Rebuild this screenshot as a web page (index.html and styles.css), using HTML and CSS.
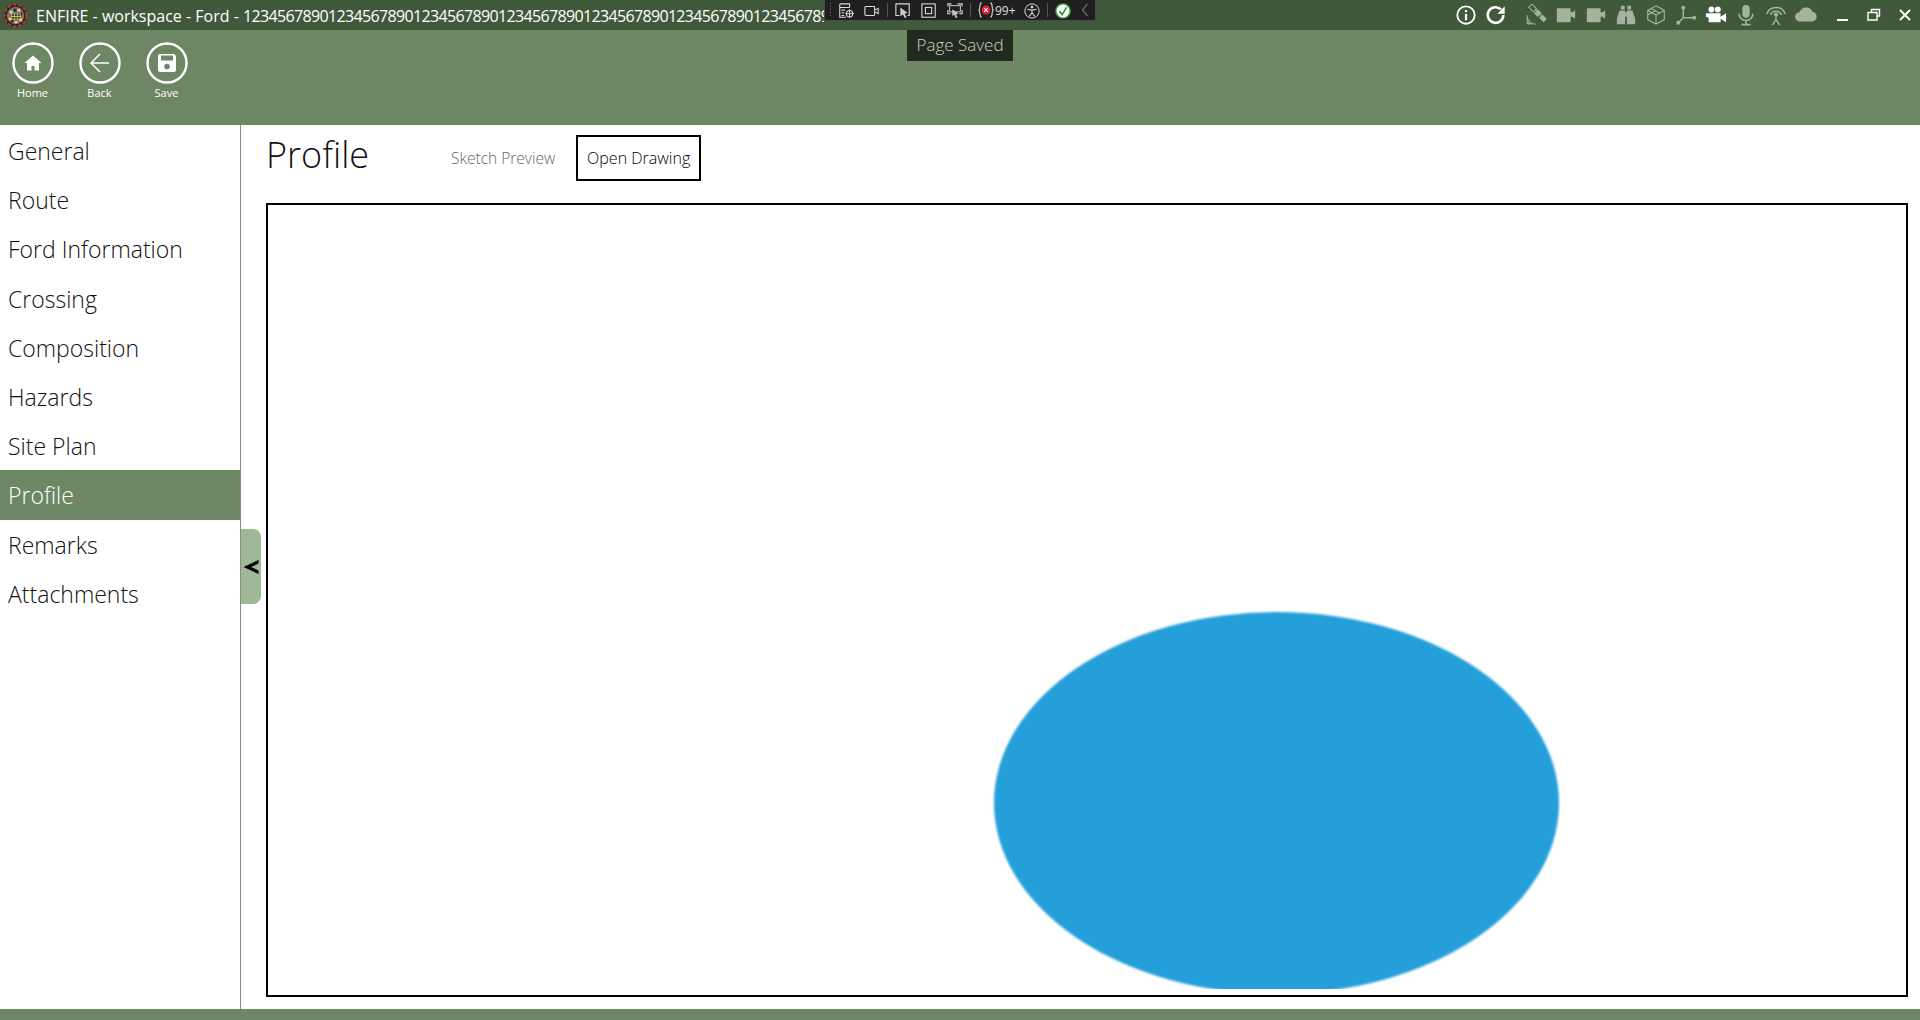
FILE: index.html
```html
<!DOCTYPE html>
<html lang="en">
<head>
    <meta charset="UTF-8">
    <title>ENFIRE - Profile</title>
    <link rel="stylesheet" href="styles.css">
</head>
<body>

<div class="titlebar">
    <svg class="logo" viewBox="0 0 26 26">
        <circle cx="13" cy="13" r="12" fill="#2a211c"/>
        <circle cx="13" cy="13" r="11.200" fill="none" stroke="#d6322a" stroke-width="1.600" stroke-dasharray="4 1.500"/>
        <circle cx="13" cy="13" r="9" fill="#7d7a70"/>
        <path d="M7 8h3v3H7zM15 6h3v3h-3zM6 15h3v3H6zM17 16h3v3h-3zM12 19h3v2h-3z" fill="#d4d1c6"/>
        <path d="M11 6h3v3h-3zM18 10h2v3h-2zM8 18h3v2H8z" fill="#2f2c28"/>
        <path d="M8 12h11v4H8z" fill="#2a2822"/>
        <path d="M9 11v6M12 11v6M15 11v6M18 11v6M8 14h11" stroke="#e8c53a" stroke-width="1"/>
    </svg>
    <div class="title">ENFIRE - workspace - Ford - <span class="num">123456789012345678901234567890123456789012345678901234567890123456789012345678901234567890</span></div>
    <div class="sys-icons">
        <span class="sys"><svg viewBox="0 0 24 24"><circle cx="12" cy="12" r="9.500" fill="none" stroke="#fff" stroke-width="2"/><path d="M12 6.500v2.400M12 10.800v7" stroke="#fff" stroke-width="2.400"/></svg></span>
        <span class="sys refresh"><svg viewBox="0 0 24 24"><path d="M20 12a8.500 8.500 0 1 1-2.600-6.100" fill="none" stroke="#fff" stroke-width="2.800"/><path d="M21.500 2.500v8h-8z" fill="#fff"/></svg></span>
        <span class="sys off"><svg viewBox="0 0 24 24"><g transform="rotate(45 14 10)" fill="#a3b39d"><rect x="11" y="7" width="6" height="6"/><rect x="2.500" y="7.500" width="7" height="5" fill="none" stroke="#a3b39d" stroke-width="1.100"/><rect x="18.500" y="7.500" width="7" height="5"/><path d="M9 9.500h3M16 9.500h3" stroke="#a3b39d"/></g><path d="M2 12a10 10 0 0 0 10 10M2 16a6 6 0 0 0 6 6M2 19.500a2.500 2.500 0 0 0 2.500 2.500" fill="none" stroke="#a3b39d" stroke-width="1.100"/></svg></span>
        <span class="sys off"><svg viewBox="0 0 24 24"><path d="M2 5.500a1 1 0 0 1 1-1h13a1 1 0 0 1 1 1V9h2l3-2v9l-3-2h-2v5a1 1 0 0 1-1 1H3a1 1 0 0 1-1-1z" fill="#a3b39d"/></svg></span>
        <span class="sys off"><svg viewBox="0 0 24 24"><path d="M2 5.500a1 1 0 0 1 1-1h13a1 1 0 0 1 1 1V9h2l3-2v9l-3-2h-2v5a1 1 0 0 1-1 1H3a1 1 0 0 1-1-1z" fill="#a3b39d"/></svg></span>
        <span class="sys off"><svg viewBox="0 0 24 24"><path d="M6.500 2h4v4h-4zM13.500 2h4v4h-4zM5 7h6v15H2v-6zM13 7h6l3 9v6h-9zM11 9h2v5h-2z" fill="#a3b39d"/></svg></span>
        <span class="sys off"><svg viewBox="0 0 24 24"><path d="M12 2l9 5v10l-9 5-9-5V7zM3 7l9 5 9-5M12 12v10M7 5l9 5M3 12l9-5" fill="none" stroke="#a3b39d" stroke-width="1.200"/></svg></span>
        <span class="sys off"><svg viewBox="0 0 24 24"><path d="M9 4v11l-6 6M9 15h12" fill="none" stroke="#a3b39d" stroke-width="1.600"/><circle cx="9" cy="4" r="2.200" fill="#a3b39d"/><circle cx="21" cy="15" r="2.200" fill="#a3b39d"/><circle cx="3.500" cy="20.500" r="2.200" fill="#a3b39d"/></svg></span>
        <span class="sys"><svg viewBox="0 0 24 24"><circle cx="7" cy="6" r="3.200" fill="#fff"/><circle cx="14" cy="6" r="3.200" fill="#fff"/><path d="M1 10h16v4l6-4v10l-6-4v4H4v-5l-3-1z" fill="#fff"/></svg></span>
        <span class="sys off"><svg viewBox="0 0 24 24"><rect x="8" y="1" width="8" height="14" rx="4" fill="#a3b39d"/><path d="M4.500 10.500a7.500 7.500 0 0 0 15 0M12 18v4M7 22.500h10" fill="none" stroke="#a3b39d" stroke-width="1.800"/></svg></span>
        <span class="sys off"><svg viewBox="0 0 24 24"><path d="M2 11a10.500 10.500 0 0 1 20 0M6 12a6.500 6.500 0 0 1 12 0" fill="none" stroke="#a3b39d" stroke-width="1.600"/><circle cx="12" cy="11.500" r="2.200" fill="#a3b39d"/><path d="M12 13v4l-4 6M12 17l4 6" fill="none" stroke="#a3b39d" stroke-width="1.600"/></svg></span>
        <span class="sys off"><svg viewBox="0 0 24 24"><path d="M5 19a5 5 0 0 1 0-10 7.500 7.500 0 0 1 14-.5 5.300 5.300 0 0 1 0 10.500z" fill="#a3b39d"/></svg></span>
        <span class="win min"><svg viewBox="0 0 14 14"><path d="M1 12h11" stroke="#fff" stroke-width="2"/></svg></span>
        <span class="win"><svg viewBox="0 0 14 14"><path d="M4.500 4V1.500h8V8H10M1 4.500h9v7.500H1z" fill="none" stroke="#fff" stroke-width="1.400"/></svg></span>
        <span class="win"><svg viewBox="0 0 14 14"><path d="M2 2l10 10M12 2L2 12" stroke="#fff" stroke-width="2"/></svg></span>
    </div>
</div>

<!-- debug toolbar that floats over the title bar -->
<div class="debugbar">
    <span class="grip"></span>
    <svg class="dbg" viewBox="0 0 18 18"><path d="M2 1h11v4M2 1v15h7M2 5h11M4 8h4M4 11h3M4 14h3" fill="none" stroke="#ddd" stroke-width="1.200"/><circle cx="13" cy="12" r="3.500" fill="none" stroke="#ddd" stroke-width="1.200"/><path d="M13 7v10M8 12h10" stroke="#ddd"/></svg>
    <svg class="dbg" viewBox="0 0 18 18"><rect x="1" y="4" width="11" height="10" rx="1" fill="none" stroke="#ddd" stroke-width="1.200"/><path d="M12 8l4-2v6l-4-2" fill="none" stroke="#ddd" stroke-width="1.200"/></svg>
    <i class="sep"></i>
    <svg class="dbg" viewBox="0 0 18 18"><path d="M5 14H1V1h15v13h-2" fill="none" stroke="#ddd" stroke-width="1.200"/><path d="M6 5l8 6-3 1 2 4-2 1-2-4-3 2z" fill="#ccc"/></svg>
    <svg class="dbg" viewBox="0 0 18 18"><rect x="1" y="1" width="15" height="15" fill="none" stroke="#ddd" stroke-width="1.200"/><rect x="5" y="5" width="7" height="7" fill="none" stroke="#ddd" stroke-width="1.200"/></svg>
    <svg class="dbg" viewBox="0 0 18 18"><path d="M1 4V1h4M12 1h5v3M1 8v4h3M14 12h3V8" fill="none" stroke="#ddd" stroke-width="1.200"/><rect x="3" y="3" width="12" height="7" fill="none" stroke="#ddd"/><path d="M6 7l7 5-3 1 2 3-2 1-2-4-2 2z" fill="#ccc"/></svg>
    <i class="sep"></i>
    <span class="count"><svg viewBox="0 0 18 18"><path d="M4 1C1 1 3 8 1 9c2 1 0 8 3 8M14 1c3 0 1 7 3 8-2 1 0 8-3 8" fill="none" stroke="#ddd" stroke-width="1.200"/><circle cx="9" cy="9" r="5" fill="#e02030"/><path d="M7 7l4 4M11 7l-4 4" stroke="#fff" stroke-width="1.200"/></svg>99+</span>
    <svg class="dbg" viewBox="0 0 18 18"><circle cx="9" cy="9" r="8" fill="none" stroke="#ddd" stroke-width="1.100"/><circle cx="9" cy="4.500" r="1.500" fill="#ddd"/><path d="M4 7l5 1 5-1M9 8v3l-3 4M9 11l3 4" fill="none" stroke="#ddd" stroke-width="1.200"/></svg>
    <i class="sep"></i>
    <svg class="dbg" viewBox="0 0 18 18"><circle cx="9" cy="9" r="8" fill="#fff" stroke="#3da33d" stroke-width="1.600"/><path d="M5 9l3 4 5-8" fill="none" stroke="#2e8b2e" stroke-width="1.800"/></svg>
    <svg class="chev" viewBox="0 0 8 14"><path d="M6.500 1L1.500 7l5 6" fill="none" stroke="#666" stroke-width="1.300"/></svg>
</div>

<div class="toast">Page Saved</div>

<div class="toolbar">
    <div class="tool">
        <svg viewBox="0 0 44 44"><circle cx="22" cy="22" r="19.500" fill="none" stroke="#fff" stroke-width="2.400"/><path d="M22 14.500L13.500 22H16v7.500h4.500V25h3v4.500H28V22h2.500z" fill="#fff"/></svg>
        <span>Home</span>
    </div>
    <div class="tool">
        <svg viewBox="0 0 44 44"><circle cx="22" cy="22" r="19.500" fill="none" stroke="#fff" stroke-width="2.400"/><path d="M22 13l-9 9 9 9M13 22h18" fill="none" stroke="#fff" stroke-width="1.500"/></svg>
        <span>Back</span>
    </div>
    <div class="tool">
        <svg viewBox="0 0 44 44"><circle cx="22" cy="22" r="19.500" fill="none" stroke="#fff" stroke-width="2.400"/><path d="M13 15a2 2 0 0 1 2-2h14l2 2v14a2 2 0 0 1-2 2H15a2 2 0 0 1-2-2z" fill="#fff"/><rect x="16" y="14.500" width="12" height="5" fill="#6d8764"/><circle cx="22" cy="25.500" r="2.800" fill="#6d8764"/></svg>
        <span>Save</span>
    </div>
</div>

<div class="main">
    <div class="sidebar">
        <div class="nav">General</div>
        <div class="nav">Route</div>
        <div class="nav">Ford Information</div>
        <div class="nav">Crossing</div>
        <div class="nav">Composition</div>
        <div class="nav">Hazards</div>
        <div class="nav">Site Plan</div>
        <div class="nav active">Profile</div>
        <div class="nav">Remarks</div>
        <div class="nav">Attachments</div>
        <div class="collapse"><svg viewBox="0 0 16 16"><path d="M15.500 1L0.500 8l15 7v-3.500L8 8l7.500-3.500z" fill="#000"/></svg></div>
    </div>
    <div class="content">
        <div class="head">
            <h1>Profile</h1>
            <span class="link">Sketch Preview</span>
            <button class="btn">Open Drawing</button>
        </div>
        <div class="canvas">
            <svg class="drawing" viewBox="0 0 1638 784"><ellipse class="blob" cx="1008.500" cy="598" rx="282.500" ry="191"/></svg>
        </div>
    </div>
</div>

<div class="footer"></div>

</body>
</html>
```

FILE: styles.css
```css
html, body {
    margin: 0;
    height: 100%;
}
body {
    font-family: "Open Sans", "Noto Sans", sans-serif;
    display: flex;
    flex-direction: column;
    height: 1020px;
    overflow: hidden;
    position: relative;
    background: #fff;
}

.titlebar {
    height: 30px;
    background: #41593b;
    display: flex;
    align-items: center;
    flex: none;
    color: #fff;
}
.logo {
    width: 25px;
    height: 25px;
    margin: 0 8px 0 3px;
    flex: none;
}
.title {
    width: 788px;
    flex: none;
    overflow: hidden;
    white-space: nowrap;
    font-size: 16px;
    padding-top: 2px;
    margin-right: auto;
}
.num {
    letter-spacing: -0.65px;
}
.sys-icons {
    display: flex;
    align-items: center;
}
.sys {
    width: 30px;
    height: 30px;
    display: flex;
    align-items: center;
    justify-content: center;
}
.sys svg {
    width: 22px;
    height: 22px;
}
.refresh {
    margin-right: 10px;
}
.win {
    width: 31px;
    height: 30px;
    display: flex;
    align-items: center;
    justify-content: center;
}
.win.min {
    margin-left: 6px;
}
.win svg {
    width: 14px;
    height: 14px;
}

.debugbar {
    position: absolute;
    left: 824px;
    top: 0;
    width: 272px;
    height: 21px;
    box-sizing: border-box;
    background: #1f1f1f;
    border: 1px solid #4a4a4a;
    border-top: none;
    display: flex;
    align-items: center;
    gap: 10px;
    color: #ddd;
    font-size: 12px;
}
.grip {
    width: 4px;
    height: 16px;
    margin-left: 4px;
    margin-right: -5px;
    background-image: radial-gradient(#777 0.6px, transparent 0.8px);
    background-size: 3px 3px;
}
.dbg {
    width: 16px;
    height: 16px;
    flex: none;
    margin-top: 1px;
}
.sep {
    width: 1px;
    height: 14px;
    margin: 0 -3px;
    background: #555;
}
.count {
    display: flex;
    align-items: center;
    gap: 1px;
    width: 36px;
    white-space: nowrap;
}
.count svg {
    width: 16px;
    height: 16px;
    flex: none;
}
.chev {
    width: 8px;
    height: 14px;
}

.toast {
    position: absolute;
    left: 907px;
    top: 30px;
    width: 106px;
    height: 31px;
    background: #212a1f;
    color: #c9d2c7;
    font-size: 17px;
    font-weight: 300;
    text-align: center;
    line-height: 30px;
}

.toolbar {
    height: 95px;
    background: #6d8764;
    flex: none;
    display: flex;
    padding: 11px 0 0 0;
    box-sizing: border-box;
}
.tool {
    width: 67px;
    display: flex;
    flex-direction: column;
    align-items: center;
    color: #fff;
    font-size: 11px;
}
.tool:first-child {
    margin-left: -1px;
}
.tool svg {
    width: 44px;
    height: 44px;
}

.main {
    flex: 1;
    display: flex;
    min-height: 0;
}
.sidebar {
    width: 241px;
    box-sizing: border-box;
    border-right: 1px solid #8a8a8a;
    flex: none;
    position: relative;
    padding-top: 1px;
}
.nav {
    height: 49.200px;
    line-height: 51px;
    padding-left: 8px;
    font-size: 23px;
    font-weight: 300;
    color: #111;
}
.nav.active {
    background: #6d8764;
    color: #fff;
}
.collapse {
    position: absolute;
    left: 241px;
    top: 404px;
    width: 20px;
    height: 75px;
    background: #9fb996;
    border-radius: 0 8px 8px 0;
    display: flex;
    align-items: center;
    padding-left: 2px;
    box-sizing: border-box;
}
.collapse svg {
    width: 16px;
    height: 16px;
}

.content {
    flex: 1;
    padding: 10px 12px 12px 25px;
    display: flex;
    flex-direction: column;
    min-width: 0;
}
.head {
    display: flex;
    align-items: center;
    height: 46px;
    margin-bottom: 22px;
    flex: none;
}
h1 {
    margin: 0 85px 8px 0;
    font-size: 36px;
    font-weight: 300;
    color: #111;
    width: 100px;
    white-space: nowrap;
}
.link {
    font-size: 15.500px;
    font-weight: 300;
    color: #666;
    margin-right: 21px;
}
.btn {
    height: 46px;
    width: 125px;
    background: #fff;
    border: 2px solid #000;
    font-family: inherit;
    font-size: 16px;
    font-weight: 300;
    color: #000;
    padding: 0;
}
.canvas {
    flex: 1;
    border: 2px solid #000;
    min-height: 0;
    overflow: hidden;
}
.drawing {
    display: block;
    width: 1638px;
    height: 784px;
}
.blob {
    fill: #259fda;
    filter: blur(0.8px);
}

.footer {
    height: 11px;
    background: #6d8764;
    flex: none;
}
```
